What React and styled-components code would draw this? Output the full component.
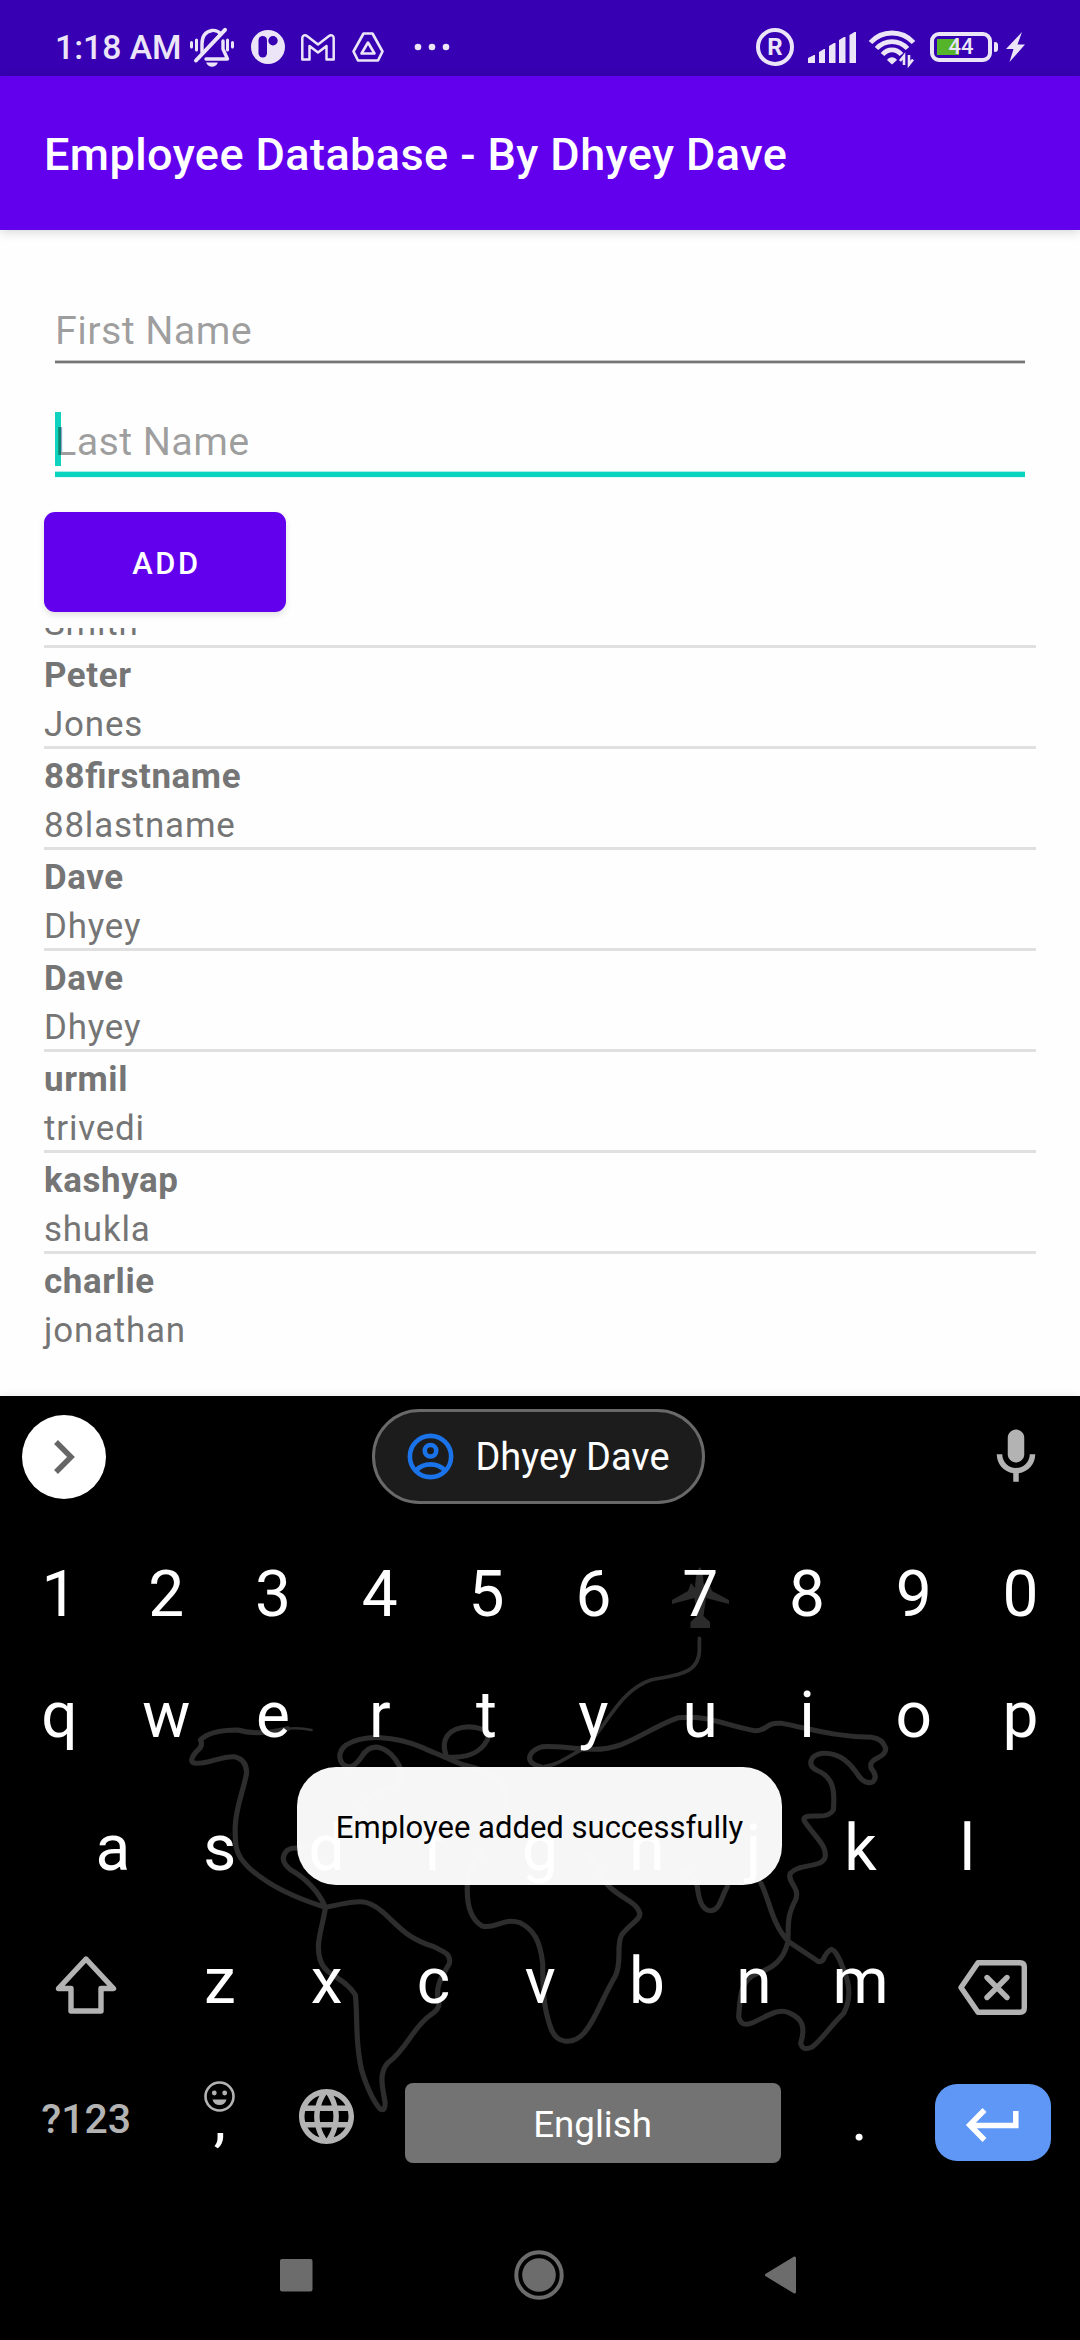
import React from "react";
import styled, { createGlobalStyle, css } from "styled-components";

const Global = createGlobalStyle`
  * { box-sizing: border-box; }
  body { margin: 0; background: #fff; font-family: Roboto, "Liberation Sans", sans-serif; }
`;

const Screen = styled.div`
  position: relative;
  width: 1080px;
  height: 2340px;
  display: flex;
  flex-direction: column;
  overflow: hidden;
  background: #fefefe;
`;

/* ---------- status bar ---------- */

const StatusBar = styled.header`
  height: 76px;
  padding: 18px 55px 0 55px;
  display: flex;
  align-items: center;
  justify-content: space-between;
  background: #3700b3;
  color: #ebe5f7;
`;

const StatusGroup = styled.div`
  display: flex;
  align-items: center;
  height: 58px;
`;

const Clock = styled.span`
  width: 135px;
  font-size: 33.7px;
  line-height: 40px;
  font-weight: 500;
  white-space: nowrap;
  margin-top: 2px;
`;

const Glyph = styled.svg`
  display: block;
  flex: none;
  width: ${(p) => p.$w}px;
  height: ${(p) => p.$h}px;
  margin-left: ${(p) => p.$gap || 0}px;
  margin-top: ${(p) => p.$top || 0}px;
  overflow: visible;
`;

const RoamBadge = styled.span`
  width: 38px;
  height: 38px;
  margin-right: 1px;
  border: 4px solid currentColor;
  border-radius: 50%;
  display: flex;
  align-items: center;
  justify-content: center;
  font-size: 24px;
  font-weight: 700;
  line-height: 30px;
`;

const Battery = styled.span`
  width: 62px;
  height: 30px;
  margin-left: 15px;
  border: 4px solid currentColor;
  border-radius: 9px;
  display: flex;
  align-items: center;
  justify-content: center;
  font-size: 22px;
  line-height: 24px;
  font-weight: 500;
  color: #ebe5f7;
  background: linear-gradient(#55b42a, #55b42a) 3px 3px / 22px 16px no-repeat;
`;

const BatteryTip = styled.span`
  width: 4px;
  height: 10px;
  margin-left: 2px;
  border-radius: 1px 3px 3px 1px;
  background: currentColor;
`;

/* ---------- app ---------- */

const AppBar = styled.div`
  position: relative;
  z-index: 1;
  height: 154px;
  padding: 3px 44px 0;
  display: flex;
  align-items: center;
  background: #6200ee;
  box-shadow: 0 2px 10px rgba(0, 0, 0, 0.16);
`;

const Title = styled.h1`
  margin: 0;
  color: #fff;
  font-size: 45px;
  line-height: 54px;
  font-weight: 500;
  letter-spacing: 0.42px;
  white-space: nowrap;
`;

const Form = styled.section`
  padding: 77px 44px 16px;
  display: flex;
  flex-direction: column;
  align-items: flex-start;
`;

const Field = styled.div`
  position: relative;
  width: 970px;
  margin: 0 11px ${(p) => (p.$focused ? 35 : 55)}px;
  display: flex;
  flex-direction: column;
  gap: 8px;
`;

const Placeholder = styled.span`
  position: relative;
  height: 46px;
  color: rgba(0, 0, 0, 0.38);
  font-size: 39.6px;
  line-height: 48px;
  letter-spacing: 0.35px;
  white-space: nowrap;
`;

const Caret = styled.i`
  position: absolute;
  left: 0;
  top: -6px;
  width: 6px;
  height: 54px;
  background: #10d3bf;
`;

const Underline = styled.div`
  ${(p) =>
    p.$focused
      ? css`
          height: 5px;
          background: #0ad4c0;
          box-shadow: 0 -1px 0 #a5efe7, 0 1px 0 #dffaf7;
        `
      : css`
          height: 2px;
          background: #757575;
          box-shadow: 0 -1px 0 #c4c4c4, 0 1px 0 #d0d0d0;
        `}
`;

const AddButton = styled.button`
  width: 242px;
  height: 100px;
  padding: 3px 0 0 3px;
  border: 0;
  border-radius: 11px;
  background: #6200ee;
  color: #fff;
  font: 500 30.8px/36px Roboto, "Liberation Sans", sans-serif;
  letter-spacing: 2.7px;
  box-shadow: 0 3px 6px rgba(0, 0, 0, 0.12);
`;

const List = styled.ul`
  flex: none;
  height: 768px;
  margin: 0;
  padding: 0 44px 44px;
  list-style: none;
  display: flex;
  flex-direction: column;
  justify-content: flex-end;
  overflow: hidden;
`;

const Employee = styled.li`
  flex: none;
  height: 101px;
  padding-top: 2.5px;
  border-bottom: 3px solid #e0e0e0;
  display: flex;
  flex-direction: column;
  color: #757575;
  font-size: 34.9px;
  line-height: 49px;
  letter-spacing: 0.82px;

  &:last-child {
    height: 98px;
    border-bottom: 0;
  }
`;

const FirstName = styled.strong`
  height: 49px;
  font-weight: 700;
  letter-spacing: 0.6px;
  font-feature-settings: "liga" 1;
`;

const LastName = styled.span`
  height: 46px;
`;

/* ---------- keyboard ---------- */

const Keyboard = styled.section`
  position: relative;
  flex: none;
  height: 944px;
  background: #000;
  color: #fff;
  display: flex;
  flex-direction: column;
  box-shadow: 0 -2px 8px rgba(0, 0, 0, 0.07);
`;

const MapArt = styled.svg`
  position: absolute;
  inset: 0;
  width: 1080px;
  height: 944px;
`;

const SuggestionBar = styled.div`
  position: relative;
  height: 121px;
  padding: 0 31px 0 22px;
  display: flex;
  align-items: center;
  justify-content: space-between;
`;

const RoundButton = styled.div`
  width: 84px;
  height: 84px;
  border-radius: 50%;
  background: #fff;
  display: flex;
  align-items: center;
  justify-content: center;
`;

const Suggestion = styled.div`
  width: 333px;
  height: 95px;
  margin-right: 12px;
  padding-left: 28px;
  border: 3px solid #696969;
  border-radius: 48px;
  background: #1c1c1c;
  display: flex;
  align-items: center;
  gap: 17.5px;
  font-size: 37.9px;
  line-height: 44px;
  white-space: nowrap;
`;

const Keys = styled.div`
  position: relative;
  height: ${(p) => p.$h}px;
  padding: ${(p) => p.$top || 0}px ${(p) => p.$pad}px 0;
  display: flex;
`;

const Key = styled.div`
  flex: none;
  width: ${(p) => p.$w || 106.8}px;
  display: flex;
  flex-direction: column;
  align-items: center;
  font-size: 64px;
  line-height: 76px;
`;

const SymbolsKey = styled(Key)`
  padding-top: 23.5px;
  color: #b3b3b3;
  font-size: 41px;
  line-height: 50px;
  font-weight: 500;
`;

const CommaKey = styled(Key)`
  padding-top: 11px;
`;

const Mark = styled.span`
  height: 64px;
  margin-top: ${(p) => p.$top}px;
  font-size: 62px;
  line-height: 64px;
`;

const SpaceKey = styled.div`
  width: 376px;
  height: 80px;
  margin: 13px 25.5px 0 24.5px;
  padding-top: 3px;
  border-radius: 8px;
  background: #737373;
  display: flex;
  align-items: center;
  justify-content: center;
  font-size: 36.7px;
  line-height: 44px;
`;

const EnterKey = styled.div`
  width: 116px;
  height: 77px;
  margin: 14px 0 0 22px;
  border-radius: 22px;
  background: #5f97f6;
  display: flex;
  align-items: center;
  justify-content: center;
`;

const NavBar = styled.nav`
  position: relative;
  height: 130px;
  padding: 0 283px 0 280px;
  display: flex;
  align-items: center;
  justify-content: space-between;
`;

const Toast = styled.div`
  position: absolute;
  left: 297px;
  top: 1767px;
  width: 485px;
  height: 118px;
  padding-top: 4px;
  border-radius: 39px;
  background: rgba(255, 255, 255, 0.966);
  color: #000;
  display: flex;
  align-items: center;
  justify-content: center;
  font-size: 31px;
  line-height: 40px;
  white-space: nowrap;
`;

/* The list is scrolled to its end, so the first entry shows only its last name. */
const employees = [
  ["", "Smith"],
  ["Peter", "Jones"],
  ["88firstname", "88lastname"],
  ["Dave", "Dhyey"],
  ["Dave", "Dhyey"],
  ["urmil", "trivedi"],
  ["kashyap", "shukla"],
  ["charlie", "jonathan"],
];

function StatusIcons() {
  return (
    <>
      <Glyph $w={44} $h={39} viewBox="0 0 44 39" fill="none" stroke="currentColor" strokeWidth="3.4" strokeLinecap="round">
        <path d="M12 24V16C12 8 16 3.500 22 2.500C26 2 29 4 31 6" />
        <path d="M35 1.800L6 32.500" strokeWidth="4" />
        <path d="M33 13V21L37.500 31H16" strokeLinejoin="round" />
        <path d="M1.500 14.500V19M6.500 12V22M37.500 12V22M42.500 14.500V19" strokeWidth="3" />
        <path d="M16 34.500H28C26.500 37.500 24.500 38.700 22 38.700S17.500 37.500 16 34.500Z" fill="currentColor" stroke="none" />
      </Glyph>
      <Glyph $w={34} $h={34} $gap={16.500} viewBox="0 0 34 34">
        <circle cx="17" cy="17" r="17" fill="currentColor" />
        <rect x="7.500" y="6" width="8.500" height="21.500" rx="4.200" fill="#3700b3" />
        <circle cx="22" cy="10.800" r="4.700" fill="#3700b3" />
      </Glyph>
      <Glyph $w={34} $h={27} $gap={16} viewBox="0 0 34 27" fill="none" stroke="currentColor" strokeWidth="2.500" strokeLinejoin="round">
        <path d="M1.300 4C1.300 1.200 4.200 .5 6 2L17 10.500L28 2C29.800 .5 32.700 1.200 32.700 4V25.500H25.500V12L17 18.500L8.500 12V25.500H1.300Z" />
      </Glyph>
      <Glyph $w={32} $h={30} $gap={17} viewBox="0 0 32 30" fill="none" stroke="currentColor" strokeWidth="2.600" strokeLinejoin="round">
        <path d="M11.500 1.500H20.500L30.500 19.500L26 28.500H6L1.500 19.500Z" />
        <path d="M16 10.500L22.500 21.500H9.500Z" />
      </Glyph>
      <Glyph $w={36} $h={8} $gap={30.500} viewBox="0 0 36 8" fill="currentColor">
        <circle cx="4" cy="4" r="3.300" />
        <circle cx="18" cy="4" r="3.300" />
        <circle cx="32" cy="4" r="3.300" />
      </Glyph>
    </>
  );
}

function SystemIcons() {
  return (
    <>
      <RoamBadge>R</RoamBadge>
      <Glyph $w={48} $h={31} $gap={13} viewBox="0 0 48 31" fill="currentColor">
        <path d="M0 31V26L6 23H7V31ZM11 31V20L16 17H17V31ZM21 31V14L26 11H27.500V31ZM31 31V8L36 5H37.500V31ZM41.500 31V3L46.500 0H48V31Z" />
      </Glyph>
      <Glyph $w={46} $h={35} $gap={13} viewBox="0 0 46 35" fill="none" stroke="currentColor" strokeWidth="4.800">
        <path d="M1.500 12.500C13 -.2 33 -.2 44.500 12.500" />
        <path d="M7.500 18.500C16 9.200 30 9.200 38.500 18.500" />
        <path d="M13.500 24.500C19 18.300 27 18.300 32.500 24.500" />
        <path d="M18 30C20.500 26.300 25.500 26.300 28 30L23 34.500Z" fill="currentColor" stroke="none" />
        <path d="M35 35V26L31 31M40 25V34.500L44 29.500" strokeWidth="2.600" />
      </Glyph>
      <Battery>44</Battery>
      <BatteryTip />
      <Glyph $w={19} $h={30} $gap={8} viewBox="0 0 19 30" fill="currentColor">
        <path d="M16 0L0 17H7.500L3.500 30L19 12.500H11.500Z" />
      </Glyph>
    </>
  );
}

/* World outline traced by the plane behind the keys. */
function WorldMap() {
  return (
    <MapArt viewBox="0 1396 1080 944" fill="none">
      <g transform="translate(0 1640) scale(.34436 .33333)" stroke="#2d2d2d" strokeWidth="15" strokeLinecap="round" strokeLinejoin="round">
        <path d="M905 270Q870 262 835 266" strokeWidth="7" />
        <path d="M835 266Q750 288 690 270Q610 270 582 300Q592 318 570 335Q545 366 567 370C610 372 640 348 680 350Q717 358 716 400C705 460 685 500 683 560C683 610 680 640 720 680C780 740 860 775 945 802C925 750 880 710 845 690C820 670 815 650 835 630Q850 620 870 626" />
        <path d="M870 626C950 600 1000 560 1050 500C1080 460 1110 440 1150 445Q1170 410 1160 378C1130 320 1080 300 1050 350Q1030 382 1010 380C980 370 980 335 1005 315C1060 280 1150 290 1220 320C1260 338 1290 350 1310 360Q1340 375 1375 382C1440 400 1480 440 1470 490" />
        <path d="M1295 345C1280 300 1300 263 1360 260C1405 263 1425 275 1415 300C1395 340 1350 357 1290 350" />
        <path d="M945 802C935 870 915 910 930 960C945 1010 1000 1010 1032 1065C1040 1150 1030 1200 1050 1290C1065 1340 1082 1382 1105 1408Q1120 1415 1118 1385C1110 1340 1100 1300 1125 1270C1180 1230 1200 1160 1250 1125Q1275 1110 1275 1090C1258 1040 1290 1000 1305 970C1310 942 1290 935 1260 920C1180 895 1160 860 1110 815C1060 770 1030 785 945 802" />
        <path d="M1400 640Q1355 690 1357 740C1355 800 1370 840 1400 858C1440 868 1460 832 1510 848C1550 870 1568 900 1576 970C1576 1050 1578 1100 1598 1160C1615 1215 1665 1215 1697 1178C1735 1130 1750 1070 1786 1010C1808 965 1788 920 1805 885C1830 850 1860 840 1858 820C1850 785 1800 775 1765 735L1710 640" />
        <path d="M1570 380Q1530 370 1540 345Q1548 328 1575 320C1610 316 1650 325 1720 328C1820 330 1870 270 1970 233C2060 225 2100 255 2190 272C2230 275 2220 245 2270 250C2350 265 2420 290 2530 292Q2562 295 2572 325C2570 360 2520 350 2530 385Q2550 410 2535 425Q2515 435 2495 410C2470 370 2440 338 2390 340C2350 345 2345 375 2370 390C2420 410 2425 450 2420 510Q2410 530 2370 528Q2325 526 2337 545C2370 595 2405 620 2395 655C2380 685 2320 670 2295 700C2285 730 2325 740 2310 780C2285 830 2290 850 2288 905C2275 965 2240 985 2200 1000C2145 1020 2150 1080 2145 1130Q2150 1160 2180 1150C2210 1140 2260 1100 2290 1118C2330 1135 2340 1160 2325 1210Q2330 1235 2360 1220C2390 1195 2410 1160 2450 1120Q2480 1060 2450 990C2440 960 2425 930 2415 928Q2400 935 2390 960Q2380 970 2370 960L2290 905C2240 850 2235 780 2210 730" />
        <path d="M1990 690Q2020 710 2025 740C2030 790 2045 812 2065 812C2090 812 2095 770 2112 740" />
        <path d="M1580 380C1620 375 1650 350 1700 322C1760 260 1800 150 1890 120C1960 105 2030 105 2031 30V-5" strokeWidth="11" />
      </g>
      <path
        fill="#2b2b2b"
        d="M700 1567C702.500 1570 703.500 1577 703.500 1583L706 1588L709 1583L712 1591L729 1600V1604L706 1598L703.500 1616L710 1622V1628H690.500V1622L697 1616L694.500 1598L672 1604V1600L688 1591L691 1583L695 1588C695.500 1577 697 1570 700 1567Z"
      />
    </MapArt>
  );
}

function LetterRow({ letters }) {
  return [...letters].map((c) => <Key key={c}>{c}</Key>);
}

export default function App() {
  return (
    <Screen>
      <Global />
      <StatusBar>
        <StatusGroup>
          <Clock>1:18 AM</Clock>
          <StatusIcons />
        </StatusGroup>
        <StatusGroup>
          <SystemIcons />
        </StatusGroup>
      </StatusBar>

      <AppBar>
        <Title>Employee Database - By Dhyey Dave</Title>
      </AppBar>

      <Form>
        <Field>
          <Placeholder>First Name</Placeholder>
          <Underline />
        </Field>
        <Field $focused>
          <Caret />
          <Placeholder>Last Name</Placeholder>
          <Underline $focused />
        </Field>
        <AddButton>ADD</AddButton>
      </Form>

      <List>
        {employees.map(([first, last], i) => (
          <Employee key={i}>
            <FirstName>{first}</FirstName>
            <LastName>{last}</LastName>
          </Employee>
        ))}
      </List>

      <Keyboard>
        <WorldMap />
        <SuggestionBar>
          <RoundButton>
            <Glyph $w={20} $h={34} viewBox="0 0 20 34" fill="none" stroke="#666" strokeWidth="5.500">
              <path d="M2 2L17 17L2 32" />
            </Glyph>
          </RoundButton>
          <Suggestion>
            <Glyph $w={55} $h={55} viewBox="0 0 24 24" fill="none" stroke="#1a73e8" strokeWidth="2">
              <circle cx="12" cy="12" r="9" />
              <circle cx="12" cy="9.500" r="2.500" />
              <path d="M5.800 18C9 14.600 15 14.600 18.200 18" />
            </Glyph>
            <span>Dhyey Dave</span>
          </Suggestion>
          <Glyph $w={66} $h={66} viewBox="0 0 24 24" fill="#b3b3b3">
            <path d="M12 14c1.660 0 3-1.340 3-3V5c0-1.660-1.340-3-3-3S9 3.340 9 5v6c0 1.660 1.340 3 3 3z" />
            <path d="M17 11c0 2.760-2.240 5-5 5s-5-2.240-5-5H5c0 3.530 2.610 6.430 6 6.920V21h2v-3.080c3.390-.49 6-3.390 6-6.920h-2z" />
          </Glyph>
        </SuggestionBar>

        <Keys $h={121} $pad={6} $top={40}>
          <LetterRow letters="1234567890" />
        </Keys>
        <Keys $h={133} $pad={6} $top={40}>
          <LetterRow letters="qwertyuiop" />
        </Keys>
        <Keys $h={133} $pad={59.500} $top={40}>
          <LetterRow letters="asdfghjkl" />
        </Keys>
        <Keys $h={166} $pad={6} $top={39.500}>
          <Key $w={160.500}>
            <Glyph $w={62} $h={60} $top={11} viewBox="0 0 62 60" fill="none" stroke="#b3b3b3" strokeWidth="5.400" strokeLinejoin="round">
              <path d="M31 4L58.500 33.500H46V56H16V33.500H3.500Z" />
            </Glyph>
          </Key>
          <LetterRow letters="zxcvbnm" />
          <Key $w={160.500}>
            <Glyph $w={69} $h={55} $gap={-3} $top={16} viewBox="0 0 69 55" fill="none" stroke="#b3b3b3" strokeWidth="5.400">
              <path d="M20 2.700H62Q66.300 2.700 66.300 7V48Q66.300 52.300 62 52.300H20L3 27.500Z" strokeLinejoin="round" />
              <path d="M29 17.500L49 37.500M49 17.500L29 37.500" strokeLinecap="round" />
            </Glyph>
          </Key>
        </Keys>
        <Keys $h={140} $pad={6}>
          <SymbolsKey $w={160.500}>?123</SymbolsKey>
          <CommaKey>
            <Glyph $w={31} $h={31} viewBox="0 0 31 31" fill="#b3b3b3">
              <circle cx="15.500" cy="15.500" r="14" fill="none" stroke="#b3b3b3" strokeWidth="2.600" />
              <circle cx="10.300" cy="12" r="2.400" />
              <circle cx="20.700" cy="12" r="2.400" />
              <path d="M8.500 18.500H22.500C21.500 22.300 19 24 15.500 24S9.500 22.300 8.500 18.500Z" />
            </Glyph>
            <Mark $top={-25}>,</Mark>
          </CommaKey>
          <Key>
            <Glyph $w={55} $h={55} $top={19} viewBox="2 2 20 20" fill="#b3b3b3">
              <path d="M11.990 2C6.470 2 2 6.480 2 12s4.470 10 9.990 10C17.520 22 22 17.520 22 12S17.520 2 11.990 2zm6.930 6h-2.950c-.32-1.250-.78-2.450-1.380-3.560 1.840.63 3.370 1.910 4.330 3.560zM12 4.040c.83 1.200 1.480 2.530 1.910 3.960h-3.820c.43-1.430 1.080-2.760 1.910-3.960zM4.260 14C4.100 13.360 4 12.690 4 12s.1-1.360.26-2h3.380c-.08.660-.14 1.320-.14 2 0 .68.060 1.340.14 2H4.260zm.82 2h2.950c.32 1.250.78 2.450 1.380 3.560-1.840-.63-3.370-1.900-4.330-3.560zm2.950-8H5.080c.96-1.660 2.490-2.930 4.330-3.560C8.810 5.550 8.350 6.750 8.030 8zM12 19.960c-.83-1.200-1.480-2.530-1.910-3.960h3.820c-.43 1.430-1.080 2.760-1.910 3.960zM14.340 14H9.660c-.09-.66-.16-1.320-.16-2 0-.68.070-1.350.16-2h4.680c.09.650.16 1.320.16 2 0 .68-.07 1.340-.16 2zm.25 5.560c.6-1.110 1.060-2.310 1.380-3.560h2.950c-.96 1.650-2.490 2.930-4.330 3.560zM16.360 14c.08-.66.14-1.320.14-2 0-.68-.06-1.340-.14-2h3.380c.16.640.26 1.310.26 2s-.1 1.360-.26 2h-3.380z" />
            </Glyph>
          </Key>
          <SpaceKey>English</SpaceKey>
          <Key>
            <Mark $top={17}>.</Mark>
          </Key>
          <EnterKey>
            <Glyph $w={53} $h={34} $top={5} viewBox="0 0 53 34" fill="none" stroke="#fff" strokeWidth="5.500">
              <path d="M49.800 3V17.500H5M18.500 2L3.700 17L18.500 32" />
            </Glyph>
          </EnterKey>
        </Keys>

        <NavBar>
          <Glyph $w={33} $h={33} viewBox="0 0 33 33" fill="#6c6c6c">
            <rect width="32.500" height="32.500" rx="2" />
          </Glyph>
          <Glyph $w={50} $h={50} viewBox="0 0 50 50" fill="#6c6c6c">
            <circle cx="25" cy="25" r="22.700" fill="none" stroke="#6c6c6c" strokeWidth="4" />
            <circle cx="25" cy="25" r="16.800" />
          </Glyph>
          <Glyph $w={33} $h={38} viewBox="0 0 33 38" fill="#6c6c6c" stroke="#6c6c6c" strokeWidth="3" strokeLinejoin="round">
            <path d="M2.500 19L30.500 2V36Z" />
          </Glyph>
        </NavBar>
      </Keyboard>

      <Toast>Employee added successfully</Toast>
    </Screen>
  );
}
